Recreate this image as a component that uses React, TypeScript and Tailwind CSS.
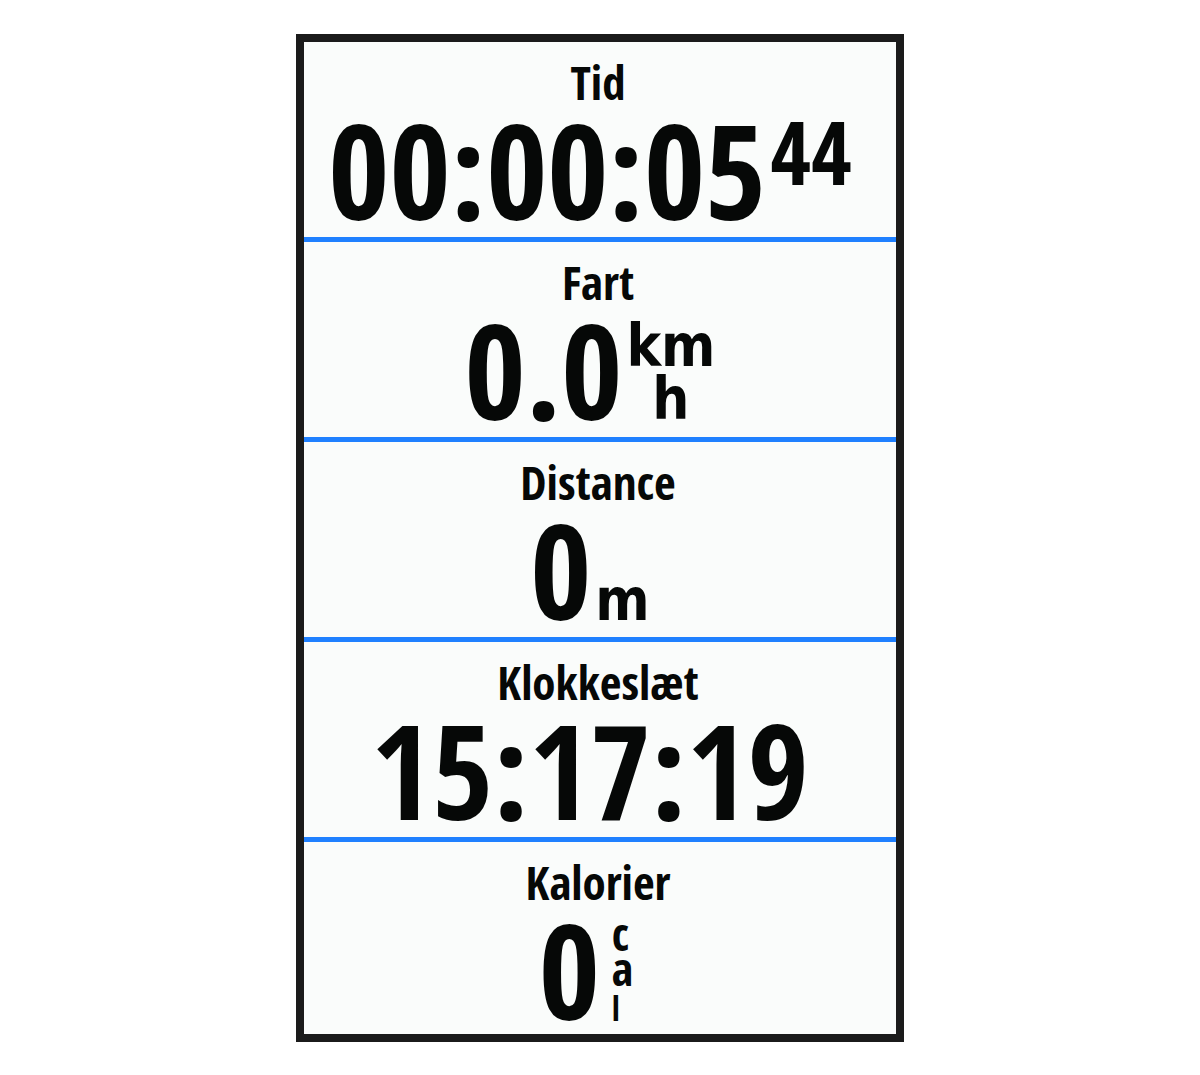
import type { ReactNode } from "react";

interface Field {
  label: string;
  value: string;
  unit?: ReactNode;
}

const fields: Field[] = [
  {
    label: "Tid",
    value: "00:00:05",
    unit: <span className="self-start text-[88px] leading-[86px]">44</span>,
  },
  {
    label: "Fart",
    value: "0.0",
    unit: (
      <span className="flex flex-col items-center pt-3 font-['DejaVu_Sans_Condensed','DejaVu_Sans',sans-serif] text-[58px] leading-[53px]">
        <span>km</span>
        <span>h</span>
      </span>
    ),
  },
  {
    label: "Distance",
    value: "0",
    unit: (
      <span className="self-baseline font-['DejaVu_Sans_Condensed','DejaVu_Sans',sans-serif] text-[58px] leading-[53px]">
        m
      </span>
    ),
  },
  { label: "Klokkeslæt", value: "15:17:19" },
  {
    label: "Kalorier",
    value: "0",
    unit: (
      <span className="flex flex-col items-start px-2 pt-2 text-[46px] leading-[35px]">
        <span>c</span>
        <span>a</span>
        {/* smaller, so the stem is no taller than the letters above it */}
        <span className="text-[34px] leading-[44px]">l</span>
      </span>
    ),
  },
];

function DataField({ label, value, unit }: Field) {
  return (
    <div className="min-h-[200px] border-b-[5px] border-[#1f80ff] pt-[14px] last:min-h-[192px] last:border-b-0">
      <dt className="pr-1 text-center text-[47px] leading-[52px]">{label}</dt>
      <dd className="flex justify-center gap-1 pr-5 text-[132px] leading-[122px]">
        <span className="self-baseline">{value}</span>
        {unit}
      </dd>
    </div>
  );
}

export default function App() {
  return (
    <main className="flex min-h-screen items-start justify-center bg-white pt-[34px]">
      <dl className="w-full max-w-[608px] border-8 border-[#1b1b1b] bg-[#fafcfb] font-['Open_Sans_Condensed','Liberation_Sans_Narrow',sans-serif] font-bold text-[#060807]">
        {fields.map((field) => (
          <DataField key={field.label} {...field} />
        ))}
      </dl>
    </main>
  );
}
